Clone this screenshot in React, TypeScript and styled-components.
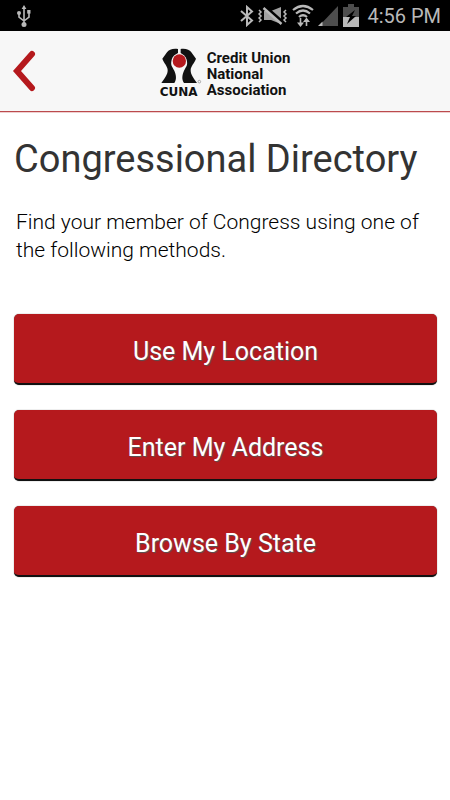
import React from "react";
import styled, { createGlobalStyle } from "styled-components";

const GlobalStyle = createGlobalStyle`
  *, *::before, *::after { box-sizing: border-box; }
  body {
    margin: 0;
    background: #fff;
    color: #000;
    font-family: Roboto, "Noto Sans", sans-serif;
  }
`;

const StatusBar = styled.div`
  display: flex;
  align-items: center;
  justify-content: space-between;
  height: 31px;
  padding: 0 9px 0 16px;
  background: #000;
`;

const StatusIcons = styled.div`
  display: flex;
  align-items: center;
  gap: 4px;
`;

const Clock = styled.time`
  padding: 2px 0 0 4px;
  color: #b9b9b9;
  font-size: 20px;
  line-height: 29px;
`;

const Header = styled.header`
  display: grid;
  grid-template-columns: 1fr auto 1fr;
  align-items: center;
  height: 81px;
  background: #f7f7f7;
  border-bottom: 1px solid #bb4a4d;
  box-shadow: 0 1px 0 #f0cfd0;
`;

const BackButton = styled.button`
  display: flex;
  justify-self: start;
  padding: 12px;
  border: 0;
  background: none;
  cursor: pointer;
`;

const Brand = styled.div`
  display: flex;
  align-items: flex-end;
  gap: 5px;
  padding-top: 4px;
  color: #111;
`;

const Emblem = styled.div`
  display: flex;
  flex-direction: column;
  align-items: flex-start;
  gap: 2px;
  width: 42px;
`;

const EmblemName = styled.span`
  font: 700 12px/12px "DejaVu Sans", sans-serif;
`;

const BrandName = styled.div`
  font: 700 15px/16px Roboto, "Noto Sans", sans-serif;
  white-space: pre-line;
`;

const Main = styled.main`
  padding: 24px 13px 24px 14px;
`;

const Title = styled.h1`
  margin: 0;
  color: #333;
  font-size: 38px;
  font-weight: 400;
  line-height: 46px;
  white-space: nowrap;
`;

const Intro = styled.p`
  margin: 26px 0 50px;
  padding-left: 2px;
  font-size: 21px;
  font-weight: 300;
  line-height: 28px;
`;

const Actions = styled.div`
  display: grid;
  gap: 25px;
`;

const ActionButton = styled.button`
  height: 71px;
  padding: 6px 0 0;
  border: 0;
  border-bottom: 2px solid #111;
  border-radius: 5px;
  background: #b5191d;
  box-shadow: 0 0 1px #555;
  color: #fff;
  font: 400 25px/30px Roboto, "Noto Sans", sans-serif;
  text-shadow: 1px 1px 1px #555;
  cursor: pointer;
`;

const ICON = "#b9b9b9";

const UsbIcon = () => (
  <svg width="16" height="24" viewBox="0 0 16 24" fill="none" stroke={ICON} strokeWidth="1.6" aria-hidden="true">
    <path d="M8 4v17M3 9v4l5 4M13 8v5l-5 4" />
    <path d="M8 1l2.4 4H5.6z" fill={ICON} stroke="none" />
    <circle cx="8" cy="20.5" r="2.5" fill={ICON} stroke="none" />
    <circle cx="3" cy="9" r="2" fill={ICON} stroke="none" />
    <path d="M11.2 6h3.3v3.6h-3.3z" fill={ICON} stroke="none" />
  </svg>
);

const BluetoothIcon = () => (
  <svg width="14" height="22" viewBox="0 0 14 22" fill="none" stroke={ICON} strokeWidth="2" aria-hidden="true">
    <path d="M1 6l11 9.5L7 20V2l5 4.5L1 16" />
  </svg>
);

const MutedIcon = () => (
  <svg width="30" height="20" viewBox="0 0 30 20" fill="none" stroke={ICON} aria-hidden="true">
    <path d="M6 5h7l10-4v17l-10-4H6z" fill="#a0a0a0" stroke="none" />
    <path d="M7 1l18 16" stroke="#000" strokeWidth="4" />
    <path d="M5.5 2l18 16" strokeWidth="2.5" />
    <path d="M1 4l2 2-2 2 2 2-2 2 2 2-2 2M28 4l-2 2 2 2-2 2 2 2-2 2 2 2" strokeWidth="1.5" />
  </svg>
);

const WifiIcon = () => (
  <svg width="22" height="24" viewBox="0 0 22 24" fill="none" stroke={ICON} strokeWidth="2.2" aria-hidden="true">
    <path d="M1 6q10-8 20 0M4 9.5q7-6 14 0M7 13q4-3.5 8 0" />
    <path d="M8.5 14v6M14.5 22v-6" strokeWidth="1.6" />
    <path d="M5 18.5h7L8.5 23zM11 18h7l-3.5-4.5z" fill={ICON} stroke="none" />
  </svg>
);

const SignalIcon = () => (
  <svg width="21" height="21" viewBox="0 0 21 21" aria-hidden="true">
    <path d="M20 1v20H1z" fill="#4d4d4d" />
    <path d="M4.5 16.5V21H0z" fill={ICON} />
  </svg>
);

const BatteryIcon = () => (
  <svg width="16" height="23" viewBox="0 0 16 23" aria-hidden="true">
    <path d="M5 0h6v3h5v20H0V3h5z" fill="#4d4d4d" />
    <path d="M0 13h16v10H0z" fill={ICON} />
    <path d="M12 6L3 13h4l-3 7 9-8H9z" fill="#000" />
  </svg>
);

const ChevronIcon = () => (
  <svg width="25" height="42" viewBox="0 0 25 42" fill="none" stroke="#b5191d" strokeWidth="6" strokeLinecap="round" aria-hidden="true">
    <path d="M20 4L5 21l15 17" />
  </svg>
);

const EmblemArt = () => (
  <svg width="42" height="36" viewBox="30 24 126 108" fill="#111" aria-hidden="true">
    <path d="M84 27C67 25 57 29 51 37L37 56C41 69 53 78 53 91C53 103 46 113 34 129H73C81 117 78 104 73 92C66 78 61 76 65 59C67 49 76 43 84 39Z" />
    <path d="M92 27C108 25 118 29 124 37L138 56C134 69 122 78 122 91C122 103 129 113 141 129H102C94 117 97 104 102 92C109 78 114 76 110 59C108 49 99 43 92 39Z" />
    <circle cx="88" cy="63" r="20" fill="#b5191d" />
    <circle cx="148" cy="125" r="4" fill="none" stroke="#888" strokeWidth="2" />
  </svg>
);

const METHODS = ["Use My Location", "Enter My Address", "Browse By State"];

export default function App() {
  return (
    <>
      <GlobalStyle />
      <StatusBar>
        <UsbIcon />
        <StatusIcons>
          <BluetoothIcon />
          <MutedIcon />
          <WifiIcon />
          <SignalIcon />
          <BatteryIcon />
          <Clock>4:56 PM</Clock>
        </StatusIcons>
      </StatusBar>
      <Header>
        <BackButton type="button" aria-label="Back">
          <ChevronIcon />
        </BackButton>
        <Brand>
          <Emblem>
            <EmblemArt />
            <EmblemName>CUNA</EmblemName>
          </Emblem>
          <BrandName>{"Credit Union\nNational\nAssociation"}</BrandName>
        </Brand>
      </Header>
      <Main>
        <Title>Congressional Directory</Title>
        <Intro>Find your member of Congress using one of the following methods.</Intro>
        <Actions>
          {METHODS.map((method) => (
            <ActionButton key={method} type="button">
              {method}
            </ActionButton>
          ))}
        </Actions>
      </Main>
    </>
  );
}
